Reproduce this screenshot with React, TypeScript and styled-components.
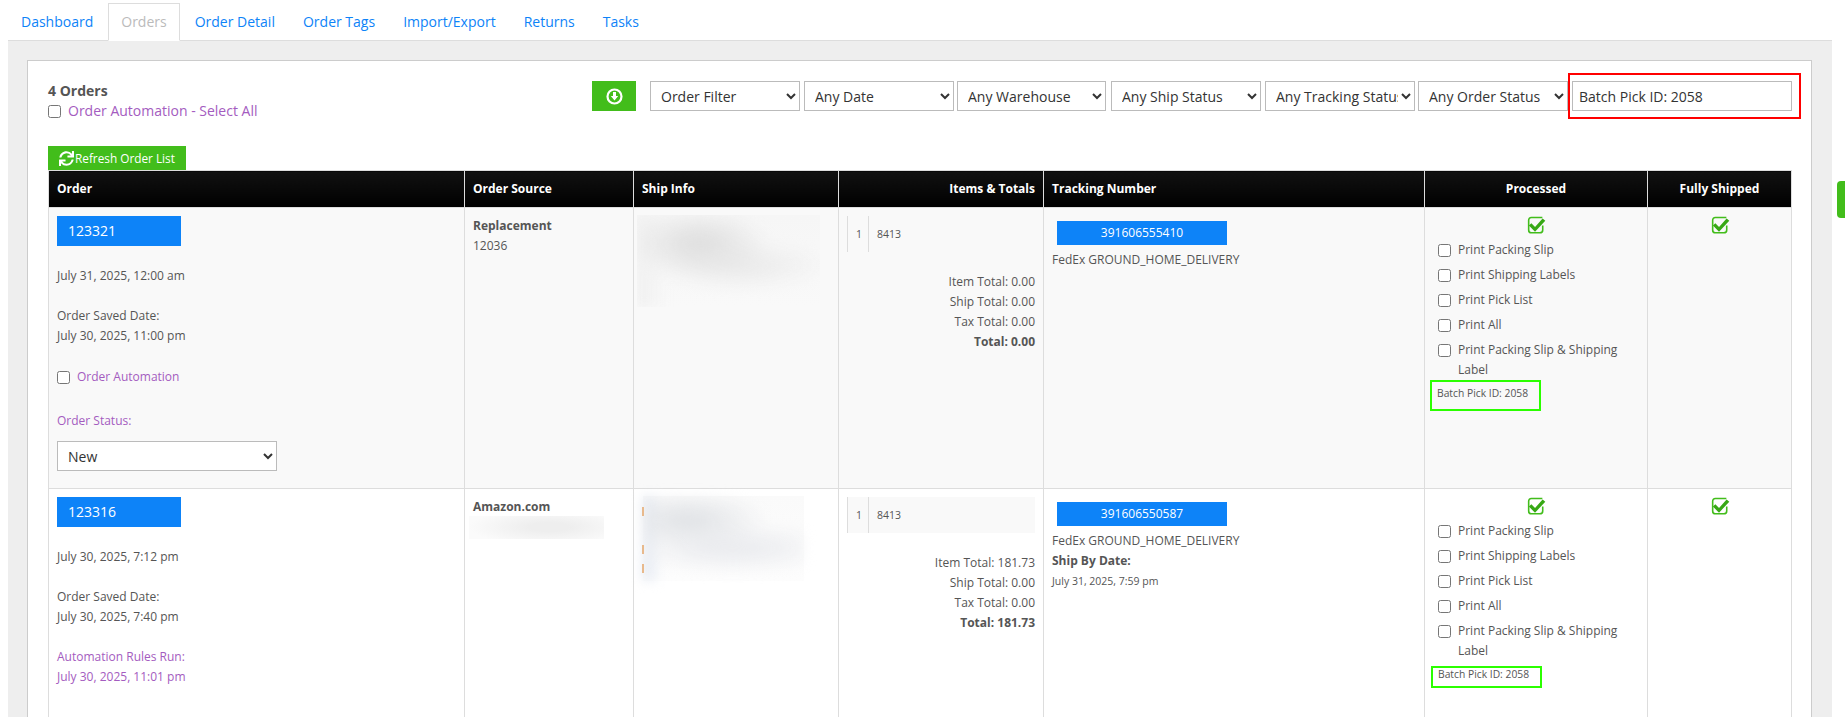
import React from 'react';
import styled, { createGlobalStyle } from 'styled-components';
import { FaSync } from 'react-icons/fa';

const GlobalStyle = createGlobalStyle`
  html, body {
    margin: 0;
    padding: 0;
    height: 717px;
    overflow: hidden;
    background: #fff;
    font-family: 'Open Sans', sans-serif;
    font-size: 12px;
    line-height: 20px;
    color: #555;
  }
  * { box-sizing: border-box; }
`;

const purple = '#a45cc0';
const green = '#42bd1b';
const blue = '#0d83f8';

const Page = styled.div`
  position: relative;
  width: 1845px;
  height: 717px;
  overflow: hidden;
`;

const SideTab = styled.div`
  position: absolute;
  top: 181px;
  right: 0;
  width: 8px;
  height: 37px;
  border-radius: 4px 0 0 4px;
  background: ${green};
`;

const TabBar = styled.nav`
  display: flex;
  align-items: flex-end;
  height: 41px;
  margin: 0 13px 0 8px;
  padding-top: 3px;
  border-bottom: 1px solid #ddd;
`;

const Tab = styled.a<{ $active?: boolean }>`
  display: flex;
  align-items: center;
  height: 38px;
  margin-right: 2px;
  margin-bottom: -1px;
  padding: 0 12px;
  border: 1px solid ${props => (props.$active ? '#ddd' : 'transparent')};
  border-bottom-color: ${props => (props.$active ? '#fff' : 'transparent')};
  background: ${props => (props.$active ? '#fff' : 'transparent')};
  color: ${props => (props.$active ? '#bbb' : blue)};
  font-size: 14px;
`;

const Content = styled.main`
  margin: 0 13px 0 8px;
  padding: 19px 20px 0 19px;
  height: 676px;
  background: #eee;
`;

const Panel = styled.section`
  height: 700px;
  padding: 20px 20px 0;
  border: 1px solid #ccc;
  background: #fff;
`;

const TopRow = styled.div`
  display: flex;
  justify-content: space-between;
  height: 65px;
`;

const Summary = styled.div`
  display: flex;
  flex-direction: column;
`;

const OrderCount = styled.strong`
  font-size: 14px;
  line-height: 20px;
`;

const Automation = styled.label<{ $small?: boolean }>`
  display: flex;
  align-items: center;
  gap: 7px;
  color: ${purple};
  font-size: ${props => (props.$small ? '12px' : '14px')};
  line-height: 20px;
`;

const Box = styled.input.attrs({ type: 'checkbox' })`
  flex: none;
  width: 13px;
  height: 13px;
  margin: 0;
`;

const Filters = styled.div`
  display: flex;
  align-items: flex-start;
  margin-right: -1px;
`;

const DownloadButton = styled.button`
  display: flex;
  align-items: center;
  justify-content: center;
  width: 44px;
  height: 30px;
  margin-right: 14px;
  padding: 0;
  border: 0;
  background: ${green};
`;

const Select = styled.select<{ $w: number; $gap?: number }>`
  width: ${props => props.$w}px;
  height: 30px;
  margin-right: ${props => props.$gap ?? 4}px;
  padding: 0 0 0 6px;
  border: 1px solid #bbb;
  background: #fff;
  color: #333;
  font-family: 'Open Sans', sans-serif;
  font-size: 14px;
`;

const SearchWrap = styled.div`
  position: relative;
`;

const SearchInput = styled.input`
  display: block;
  width: 220px;
  height: 30px;
  padding: 0 6px;
  border: 1px solid #bbb;
  background: #fff;
  color: #333;
  font-family: 'Open Sans', sans-serif;
  font-size: 14px;
`;

const RedMark = styled.div`
  position: absolute;
  top: -8px;
  left: -4px;
  width: 233px;
  height: 46px;
  border: 2px solid #f00;
  pointer-events: none;
`;

const RefreshButton = styled.button`
  display: flex;
  align-items: center;
  gap: 1px;
  width: 138px;
  height: 24px;
  padding: 0 0 0 11px;
  border: 0;
  background: ${green};
  color: #fff;
  font-family: 'Open Sans', sans-serif;
  font-size: 11.8px;
  white-space: nowrap;
`;

const OrdersTable = styled.table`
  width: 1743px;
  table-layout: fixed;
  border-collapse: collapse;
  font-size: 12px;
`;

const Th = styled.th<{ $align?: string }>`
  height: 37px;
  padding: 0 8px;
  border: 1px solid #ddd;
  background: linear-gradient(#111, #000);
  color: #fff;
  font-size: 12px;
  font-weight: 700;
  text-align: ${props => props.$align || 'left'};
`;

const Tr = styled.tr<{ $odd?: boolean }>`
  background: ${props => (props.$odd ? '#f9f9f9' : '#fff')};
`;

const Td = styled.td<{ $h?: number }>`
  height: ${props => props.$h ?? 282}px;
  padding: 8px;
  border: 1px solid #ddd;
  vertical-align: top;
`;

const OrderButton = styled.a`
  display: block;
  width: 124px;
  height: 30px;
  padding-left: 11px;
  background: ${blue};
  color: #fff;
  font-size: 14px;
  line-height: 30px;
`;

const Line = styled.div<{ $top?: number; $purple?: boolean; $bold?: boolean }>`
  margin-top: ${props => props.$top ?? 0}px;
  color: ${props => (props.$purple ? purple : '#555')};
  font-weight: ${props => (props.$bold ? 700 : 400)};
`;

const StatusSelect = styled.select`
  display: block;
  width: 220px;
  height: 30px;
  margin-top: 10px;
  padding: 0 0 0 6px;
  border: 1px solid #bbb;
  background: #fff;
  color: #333;
  font-family: 'Open Sans', sans-serif;
  font-size: 14px;
`;

// the address blocks are blurred out in the screenshot
const BlurShip = styled.div`
  position: relative;
  width: 183px;
  height: 92px;
  margin: -1px 0 0 -5px;
  overflow: hidden;
  background: linear-gradient(#f6f6f6, #f9f9f9);

  &::before {
    content: '';
    position: absolute;
    inset: 0;
    filter: blur(6px);
    background:
      radial-gradient(ellipse 70px 34px at 62px 28px, #e1e1e1 20%, rgba(225, 225, 225, 0) 100%),
      radial-gradient(ellipse 90px 26px at 100px 50px, #ebebeb 20%, rgba(235, 235, 235, 0) 100%),
      linear-gradient(90deg, #efefef, rgba(239, 239, 239, 0) 30px);
  }
`;

const BlurShipBlue = styled.div`
  position: relative;
  width: 161px;
  height: 85px;
  margin: -1px 0 0 1px;
  background: linear-gradient(#fafafa, #fdfdfd);

  &::before {
    content: '';
    position: absolute;
    inset: 0;
    filter: blur(6px);
    background:
      radial-gradient(ellipse 80px 30px at 45px 24px, #e3e5e8 20%, rgba(227, 229, 232, 0) 100%),
      radial-gradient(ellipse 110px 26px at 90px 52px, #ecedf0 25%, rgba(236, 237, 240, 0) 100%),
      linear-gradient(90deg, #dfe5f0, rgba(223, 229, 240, 0) 18px);
  }
`;

const BlurTick = styled.span<{ $top: number }>`
  position: absolute;
  top: ${props => props.$top}px;
  left: -1px;
  width: 2px;
  height: 9px;
  background: #e8b98c;
`;

const BlurSource = styled.div`
  width: 135px;
  height: 23px;
  margin: -1px 0 0 -4px;
  background:
    radial-gradient(ellipse 80px 18px at 80px 11px, #eeeeee 25%, rgba(238, 238, 238, 0) 100%),
    #fbfbfb;
`;

const ItemRow = styled.div<{ $shade?: boolean }>`
  display: flex;
  height: 36px;
  background: ${props => (props.$shade ? '#f9f9f9' : 'transparent')};
  font-size: 10.5px;
  line-height: 36px;
`;

const ItemQty = styled.div`
  width: 22px;
  padding-left: 8px;
  border-left: 1px solid #ddd;
  border-right: 1px solid #ddd;
`;

const ItemSku = styled.div`
  padding-left: 8px;
`;

const Totals = styled.div`
  margin-top: 20px;
  text-align: right;
`;

const TrackingButton = styled.a`
  display: block;
  width: 170px;
  height: 24px;
  margin: 5px 0 5px 5px;
  background: ${blue};
  color: #fff;
  font-size: 12px;
  line-height: 24px;
  text-align: center;
`;

const SmallLine = styled.div`
  font-size: 10.5px;
`;

const CheckSvg = styled.svg`
  display: block;
  margin: -1px auto 0;
`;

const PrintList = styled.div`
  display: flex;
  flex-direction: column;
  gap: 5px;
  margin-top: 5px;
  padding-left: 5px;
`;

const PrintOption = styled.label`
  display: flex;
  gap: 7px;
  line-height: 20px;
`;

const PrintBox = styled(Box)`
  margin-top: 4px;
`;

const BatchNote = styled.div<{ $h: number; $top: number; $left: number; $pad: number }>`
  width: 111px;
  height: ${props => props.$h}px;
  margin: ${props => props.$top}px 0 0 ${props => props.$left}px;
  padding: ${props => props.$pad}px 0 0 5px;
  border: 2px solid #2bff00;
  font-size: 10.3px;
  line-height: 13px;
  white-space: nowrap;
`;

const CheckMark = () => (
  <CheckSvg width='22' height='20' viewBox='0 0 18 16' fill='none'>
    <path
      d='M12.5 8.5V12c0 1.4-1 2.4-2.4 2.4H3.2C1.8 14.4 1 13.4 1 12V4.2C1 2.8 1.8 1.8 3.2 1.8h9'
      stroke={green}
      strokeWidth='1.3'
      transform='translate(2 0)'
    />
    <path d='M5.2 6.6l3 3 6.2-7 2.2 1.9-8.4 9-5-5z' fill='#37a815' />
  </CheckSvg>
);

const DownloadIcon = () => (
  <svg width='17' height='17' viewBox='0 0 17 17'>
    <circle cx='8.5' cy='8.5' r='7' fill='none' stroke='#fff' strokeWidth='2.2' />
    <path d='M7 4h3v4h2.2l-3.7 4.4L4.8 8H7z' fill='#fff' />
  </svg>
);

const printOptions = ['Print Packing Slip', 'Print Shipping Labels', 'Print Pick List', 'Print All'];

const PrintCell = ({ children }: { children: React.ReactNode }) => (
  <>
    <CheckMark />
    <PrintList>
      {printOptions.map(option => (
        <PrintOption key={option}>
          <PrintBox />
          <span>{option}</span>
        </PrintOption>
      ))}
      <PrintOption>
        <PrintBox />
        <span>Print Packing Slip &amp; Shipping Label</span>
      </PrintOption>
    </PrintList>
    {children}
  </>
);

const Totalling = ({ item, total }: { item: string; total: string }) => (
  <Totals>
    <Line>Item Total: {item}</Line>
    <Line>Ship Total: 0.00</Line>
    <Line>Tax Total: 0.00</Line>
    <Line $bold>Total: {total}</Line>
  </Totals>
);

export default function App() {
  return (
    <Page>
      <GlobalStyle />
      <TabBar>
        <Tab>Dashboard</Tab>
        <Tab $active>Orders</Tab>
        <Tab>Order Detail</Tab>
        <Tab>Order Tags</Tab>
        <Tab>Import/Export</Tab>
        <Tab>Returns</Tab>
        <Tab>Tasks</Tab>
      </TabBar>
      <Content>
        <Panel>
          <TopRow>
            <Summary>
              <OrderCount>4 Orders</OrderCount>
              <Automation>
                <Box />
                Order Automation - Select All
              </Automation>
            </Summary>
            <Filters>
              <DownloadButton>
                <DownloadIcon />
              </DownloadButton>
              <Select $w={150}><option>Order Filter</option></Select>
              <Select $w={150} $gap={3}><option>Any Date</option></Select>
              <Select $w={149} $gap={5}><option>Any Warehouse</option></Select>
              <Select $w={150}><option>Any Ship Status</option></Select>
              <Select $w={150} $gap={3}><option>Any Tracking Status</option></Select>
              <Select $w={150}><option>Any Order Status</option></Select>
              <SearchWrap>
                <SearchInput defaultValue='Batch Pick ID: 2058' />
                <RedMark />
              </SearchWrap>
            </Filters>
          </TopRow>
          <RefreshButton>
            <FaSync size={15} />
            Refresh Order List
          </RefreshButton>
          <OrdersTable>
            <colgroup>
              <col width='416' />
              <col width='169' />
              <col width='205' />
              <col width='205' />
              <col width='381' />
              <col width='223' />
              <col width='144' />
            </colgroup>
            <thead>
              <tr>
                <Th>Order</Th>
                <Th>Order Source</Th>
                <Th>Ship Info</Th>
                <Th $align='right'>Items &amp; Totals</Th>
                <Th>Tracking Number</Th>
                <Th $align='center'>Processed</Th>
                <Th $align='center'>Fully Shipped</Th>
              </tr>
            </thead>
            <tbody>
              <Tr $odd>
                <Td $h={281}>
                  <OrderButton>123321</OrderButton>
                  <Line $top={20}>July 31, 2025, 12:00 am</Line>
                  <Line $top={20}>Order Saved Date:</Line>
                  <Line>July 30, 2025, 11:00 pm</Line>
                  <Line $top={21}>
                    <Automation $small>
                      <Box />
                      Order Automation
                    </Automation>
                  </Line>
                  <Line $top={24} $purple>Order Status:</Line>
                  <StatusSelect><option>New</option></StatusSelect>
                </Td>
                <Td $h={281}>
                  <Line $bold>Replacement</Line>
                  <Line>12036</Line>
                </Td>
                <Td $h={281}>
                  <BlurShip />
                </Td>
                <Td $h={281}>
                  <ItemRow>
                    <ItemQty>1</ItemQty>
                    <ItemSku>8413</ItemSku>
                  </ItemRow>
                  <Totalling item='0.00' total='0.00' />
                </Td>
                <Td $h={281}>
                  <TrackingButton>391606555410</TrackingButton>
                  <Line>FedEx GROUND_HOME_DELIVERY</Line>
                </Td>
                <Td $h={281}>
                  <PrintCell>
                    <BatchNote $h={31} $top={0} $left={-3} $pad={5}>Batch Pick ID: 2058</BatchNote>
                  </PrintCell>
                </Td>
                <Td $h={281}>
                  <CheckMark />
                </Td>
              </Tr>
              <Tr>
                <Td $h={240}>
                  <OrderButton>123316</OrderButton>
                  <Line $top={20}>July 30, 2025, 7:12 pm</Line>
                  <Line $top={20}>Order Saved Date:</Line>
                  <Line>July 30, 2025, 7:40 pm</Line>
                  <Line $top={20} $purple>Automation Rules Run:</Line>
                  <Line $purple>July 30, 2025, 11:01 pm</Line>
                </Td>
                <Td $h={240}>
                  <Line $bold>Amazon.com</Line>
                  <BlurSource />
                </Td>
                <Td $h={240}>
                  <BlurShipBlue>
                    <BlurTick $top={11} />
                    <BlurTick $top={49} />
                    <BlurTick $top={68} />
                  </BlurShipBlue>
                </Td>
                <Td $h={240}>
                  <ItemRow $shade>
                    <ItemQty>1</ItemQty>
                    <ItemSku>8413</ItemSku>
                  </ItemRow>
                  <Totalling item='181.73' total='181.73' />
                </Td>
                <Td $h={240}>
                  <TrackingButton>391606550587</TrackingButton>
                  <Line>FedEx GROUND_HOME_DELIVERY</Line>
                  <Line $bold>Ship By Date:</Line>
                  <SmallLine>July 31, 2025, 7:59 pm</SmallLine>
                </Td>
                <Td $h={240}>
                  <PrintCell>
                    <BatchNote $h={22} $top={5} $left={-2} $pad={0}>Batch Pick ID: 2058</BatchNote>
                  </PrintCell>
                </Td>
                <Td $h={240}>
                  <CheckMark />
                </Td>
              </Tr>
            </tbody>
          </OrdersTable>
        </Panel>
      </Content>
      <SideTab />
    </Page>
  );
}
